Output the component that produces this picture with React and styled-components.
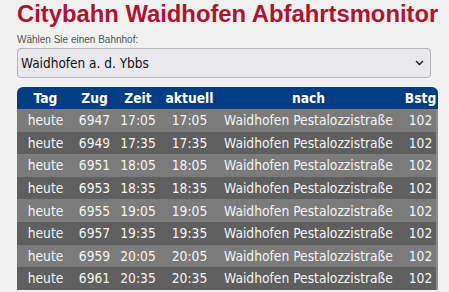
import styled, { createGlobalStyle } from "styled-components";

const rows = [
  ["6947", "17:05", "17:05"],
  ["6949", "17:35", "17:35"],
  ["6951", "18:05", "18:05"],
  ["6953", "18:35", "18:35"],
  ["6955", "19:05", "19:05"],
  ["6957", "19:35", "19:35"],
  ["6959", "20:05", "20:05"],
  ["6961", "20:35", "20:35"],
];

// column name, width
const cols = [
  ["Tag", 57],
  ["Zug", 41],
  ["Zeit", 46],
  ["aktuell", 57],
  ["nach", 181],
  ["Bstg", 39],
];

const GlobalStyle = createGlobalStyle`
  html, body {
    margin: 0;
    background: #f1f1f1;
    overflow: hidden;
  }
`;

const Page = styled.div`
  padding: 0 11px 0 17px;
  font-family: "Liberation Sans", Arial, sans-serif;
`;

const Title = styled.h1`
  margin: 0;
  font-size: 23.8px;
  line-height: 27px;
  font-weight: 700;
  color: #b0132f;
  white-space: nowrap;
`;

const Label = styled.label`
  display: block;
  margin-top: 7px;
  font-size: 10px;
  line-height: 12px;
  color: #555;
`;

const SelectWrap = styled.div`
  position: relative;
  width: 414px;
  margin-top: 2px;
`;

const Select = styled.select`
  appearance: none;
  width: 100%;
  height: 30px;
  padding: 0 3px;
  border: 1px solid #b4b4b8;
  border-radius: 4px;
  background: #e9e9ed;
  color: #111;
  font-family: "DejaVu Sans Condensed", "DejaVu Sans", sans-serif;
  font-size: 13.5px;
  outline: none;
`;

const Chevron = styled.svg`
  position: absolute;
  right: 7px;
  top: 12px;
  pointer-events: none;
`;

const Table = styled.table`
  margin-top: 9px;
  width: 421px;
  table-layout: fixed;
  border-collapse: separate;
  border-spacing: 0;
  font-family: "DejaVu Sans Condensed", "DejaVu Sans", sans-serif;
  font-size: 13.7px;
  color: #f4f4f4;
`;

const Th = styled.th`
  height: 22px;
  padding: 0;
  background: #003d82;
  color: #fff;
  font-weight: 700;
  text-align: center;
  white-space: nowrap;
  overflow: hidden;

  &:first-child {
    border-top-left-radius: 6px;
  }
  &:last-child {
    padding-left: 4px;
    border-top-right-radius: 6px;
  }
`;

const Tr = styled.tr`
  background: ${(p) => (p.$odd ? "#5f5f5f" : "#7b7b7b")};
`;

const Td = styled.td`
  height: 22.6px;
  padding: 0;
  text-align: center;
  white-space: nowrap;

  &:last-child {
    padding-left: 4px;
    box-shadow: inset -2px 0 0 #8e8e8e;
  }
`;

export default function App() {
  return (
    <Page>
      <GlobalStyle />
      <Title>Citybahn Waidhofen Abfahrtsmonitor</Title>
      <Label htmlFor="bhf">Wählen Sie einen Bahnhof:</Label>
      <SelectWrap>
        <Select id="bhf" defaultValue="ybbs">
          <option value="ybbs">Waidhofen a. d. Ybbs</option>
        </Select>
        <Chevron width="9" height="6" viewBox="0 0 9 6">
          <path d="M1 1l3.5 3.5L8 1" fill="none" stroke="#222" strokeWidth="1.4" />
        </Chevron>
      </SelectWrap>
      <Table>
        <colgroup>
          {cols.map(([name, w]) => (
            <col key={name} style={{ width: w }} />
          ))}
        </colgroup>
        <thead>
          <tr>
            {cols.map(([name]) => (
              <Th key={name}>{name}</Th>
            ))}
          </tr>
        </thead>
        <tbody>
          {rows.map(([zug, zeit, akt], i) => (
            <Tr key={zug} $odd={i % 2 === 1}>
              <Td>heute</Td>
              <Td>{zug}</Td>
              <Td>{zeit}</Td>
              <Td>{akt}</Td>
              <Td>Waidhofen Pestalozzistraße</Td>
              <Td>102</Td>
            </Tr>
          ))}
        </tbody>
      </Table>
    </Page>
  );
}
